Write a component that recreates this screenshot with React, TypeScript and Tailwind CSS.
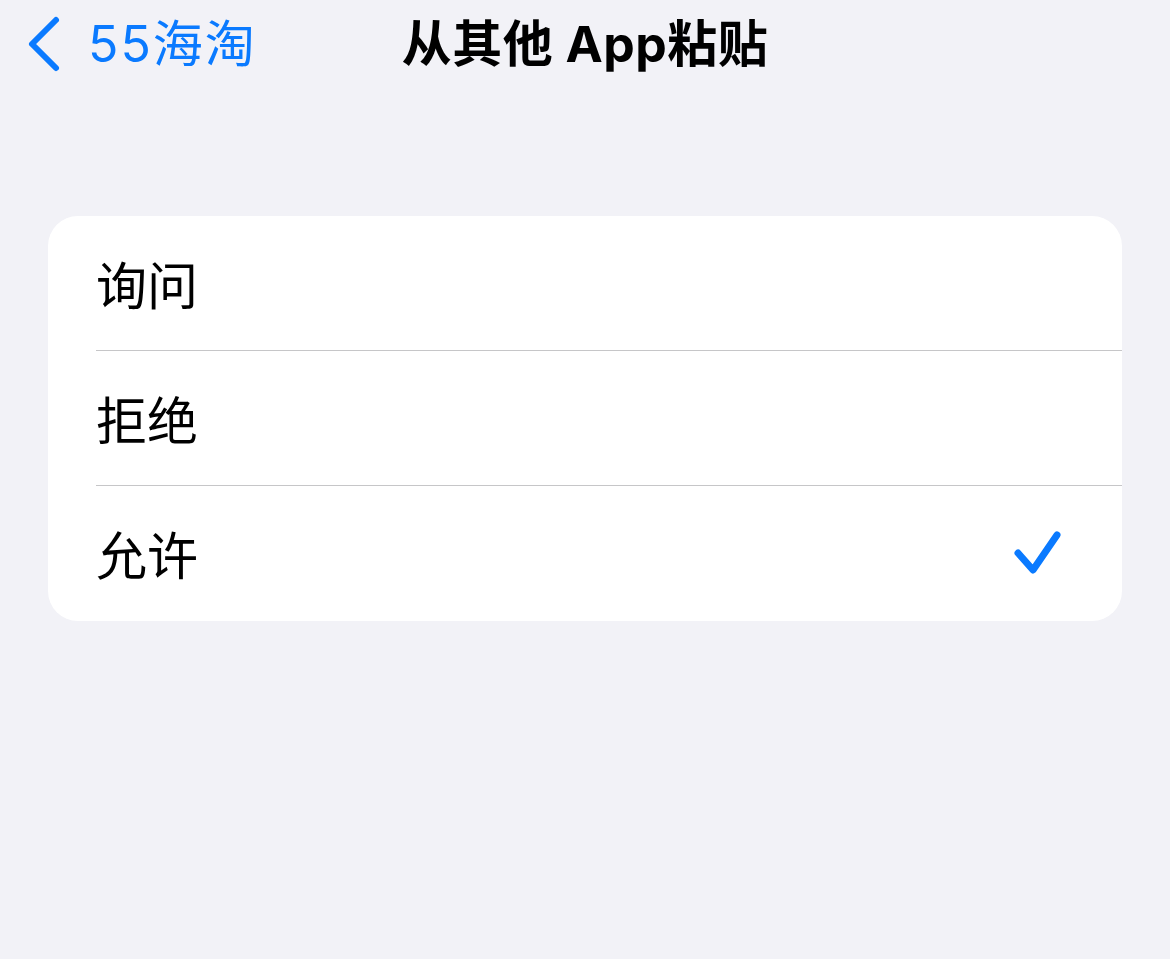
const font = { fontFamily: 'Inter, "Noto Sans CJK SC", sans-serif' }

const options = [
  { label: '询问', checked: false },
  { label: '拒绝', checked: false },
  { label: '允许', checked: true },
]

export default function App() {
  return (
    <div className="w-[1170px] h-[959px] bg-[#f2f2f7] text-black overflow-hidden" style={font}>
      {/* Nav bar */}
      <div className="relative h-[92px] flex items-center justify-center">
        <button className="absolute left-[22px] top-[12px] flex items-center text-[#0a7aff]">
          <svg width="46" height="64" viewBox="0 0 46 64" fill="none">
            <path d="M34 8 L10 32 L34 56" stroke="#0a7aff" strokeWidth="6" strokeLinecap="round" strokeLinejoin="round" />
          </svg>
          <span className="ml-[20px] text-[50px] leading-none tracking-[2px]">55海淘</span>
        </button>
        <h1 className="text-[50px] font-bold leading-none -mt-[4px] tracking-[0.5px]">从其他 App粘贴</h1>
      </div>

      {/* Options */}
      <div className="mx-[48px] mt-[124px] w-[1074px] bg-white rounded-[30px] overflow-hidden">
        {options.map((o, i) => (
          <div key={o.label} className="pl-[48px] h-[135px] relative flex items-center">
            <span className="text-[51px] leading-none pt-[6px]">{o.label}</span>
            {o.checked && (
              <svg className="absolute left-[966px] top-[44px]" width="50" height="50" viewBox="0 0 50 50" fill="none">
                <path d="M4 23 L19 40 L43 5" stroke="#0a7aff" strokeWidth="7" strokeLinecap="round" strokeLinejoin="round" />
              </svg>
            )}
            {i < options.length - 1 && (
              <div className="absolute left-[48px] right-0 bottom-0 h-px bg-[#c6c6c8]" />
            )}
          </div>
        ))}
      </div>
    </div>
  )
}
